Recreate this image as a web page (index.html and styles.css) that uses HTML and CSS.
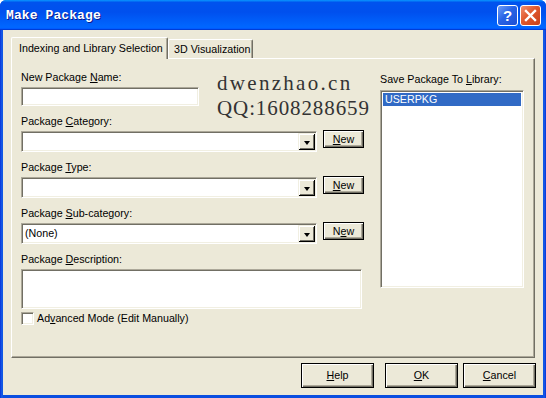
FILE: index.html
```html
<!DOCTYPE html>
<html>
<head>
<meta charset="utf-8">
<title>Make Package</title>
<link rel="stylesheet" href="styles.css">
</head>
<body>
<div class="window">
  <div class="titlebar">
    <span class="title">Make Package</span>
    <div class="title-buttons">
      <span class="tbtn tbtn-help">?</span>
      <span class="tbtn tbtn-close">
        <svg width="13" height="13" viewBox="0 0 13 13"><path d="M2 2 L11 11 M11 2 L2 11" stroke="#fff" stroke-width="2.4" stroke-linecap="square" fill="none"/></svg>
      </span>
    </div>
  </div>
  <div class="client">
    <div class="tabs">
      <div class="tab tab-active tab-index">Indexing and Library Selection</div>
      <div class="tab tab-3d">3D Visualization</div>
    </div>
    <div class="panel">
      <div class="left">
        <div class="lbl lbl-first">New Package <u>N</u>ame:</div>
        <div class="field textbox name-box"></div>

        <div class="lbl">Package <u>C</u>ategory:</div>
        <div class="field row">
          <div class="combo"><span class="combo-val"></span><span class="drop"><i class="arrow"></i></span></div>
          <button class="btn btn-new"><u>N</u>ew</button>
        </div>

        <div class="lbl">Package <u>T</u>ype:</div>
        <div class="field row">
          <div class="combo"><span class="combo-val"></span><span class="drop"><i class="arrow"></i></span></div>
          <button class="btn btn-new"><u>N</u>ew</button>
        </div>

        <div class="lbl">Package <u>S</u>ub-category:</div>
        <div class="field row">
          <div class="combo"><span class="combo-val">(None)</span><span class="drop"><i class="arrow"></i></span></div>
          <button class="btn btn-new">N<u>e</u>w</button>
        </div>

        <div class="lbl">Package <u>D</u>escription:</div>
        <div class="field textbox desc-box"></div>

        <div class="check">
          <span class="checkbox"></span>
          <span>Ad<u>v</u>anced Mode (Edit Manually)</span>
        </div>
      </div>
      <div class="right">
        <div class="lbl lbl-lib">Save Package To <u>L</u>ibrary:</div>
        <div class="listbox">
          <div class="list-item selected">USERPKG</div>
        </div>
      </div>
      <div class="watermark">
        <div class="wm-line wm-1">dwenzhao.cn</div>
        <div class="wm-line wm-2">QQ:1608288659</div>
      </div>
    </div>
    <div class="buttons">
      <button class="btn btn-dlg btn-help"><u>H</u>elp</button>
      <button class="btn btn-dlg btn-ok"><u>O</u>K</button>
      <button class="btn btn-dlg btn-cancel"><u>C</u>ancel</button>
    </div>
  </div>
</div>
</body>
</html>
```

FILE: styles.css
```css
* { box-sizing: border-box; }
html, body { margin: 0; padding: 0; }
body {
  width: 546px;
  height: 398px;
  overflow: hidden;
  background: #ffffff;
  font-family: "Liberation Sans", Arial, sans-serif;
  font-size: 10.7px;
  color: #000;
}
u { text-decoration: underline; text-underline-offset: 1px; }

.window {
  width: 546px;
  height: 398px;
  display: flex;
  flex-direction: column;
  background: linear-gradient(to right, #0831d9 0, #1660e8 2px, #0a4ee0 3px, #0a4ee0 543px, #1660e8 544px, #0831d9 546px);
  border-radius: 6px 6px 0 0;
  overflow: hidden;
}

.titlebar {
  height: 30px;
  flex: none;
  display: flex;
  align-items: center;
  padding: 0 5px 0 6px;
  background: linear-gradient(180deg, #0997ff, #0053ee 8%, #0050ee 40%, #0066ff 88%, #0066ff 93%, #005bff 95%, #003dd7 96%, #003dd7);
}
.title {
  flex: 1;
  font-family: "Liberation Mono", monospace;
  font-weight: bold;
  font-size: 13px;
  color: #fff;
  text-shadow: 1px 1px #0c1a8c;
  letter-spacing: 0.1px;
}
.title-buttons { display: flex; gap: 2px; }
.tbtn {
  width: 21px;
  height: 21px;
  border: 1px solid #fff;
  border-radius: 3px;
  display: flex;
  align-items: center;
  justify-content: center;
}
.tbtn-help {
  background: linear-gradient(135deg, #6e9ef8 0%, #2863e6 45%, #1d4fd4 100%);
  color: #fff;
  font: bold 15px "Liberation Sans", Arial, sans-serif;
}
.tbtn-close {
  background: linear-gradient(135deg, #f09070 0%, #e0582c 45%, #c8401a 100%);
}

.client {
  flex: 1;
  margin: 0 3px 3px;
  background: #ece9d8;
  display: flex;
  flex-direction: column;
  padding: 7px 8px 7px 8px;
}

.tabs {
  height: 21px;
  display: flex;
  align-items: flex-end;
  position: relative;
  z-index: 1;
}
.tab {
  height: 19px;
  border: 1px solid #fff;
  border-right-color: #716f64;
  border-bottom: none;
  border-radius: 2px 2px 0 0;
  box-shadow: inset -1px 0 #aca899;
  line-height: 13px;
  padding-top: 3px;
  white-space: nowrap;
  background: #ece9d8;
}
.tab-active {
  height: 22px;
  margin-bottom: -1px;
  padding-top: 4px;
}
.tab-index { width: 157px; padding-left: 7px; }
.tab-3d { width: 85px; padding-left: 5px; }

.panel {
  height: 300px;
  flex: none;
  position: relative;
  border: 1px solid #fff;
  border-right-color: #716f64;
  border-bottom-color: #716f64;
  box-shadow: inset -1px -1px #aca899;
  padding: 12px 0 0 9px;
  display: grid;
  grid-template-columns: 343px 144px;
  column-gap: 16px;
  align-items: start;
}

.lbl {
  height: 13px;
  line-height: 13px;
  margin-top: 9px;
  white-space: nowrap;
}
.lbl-first { margin-top: 0; }
.field { margin-top: 3px; }

.textbox, .combo, .listbox, .checkbox {
  background: #fff;
  border: 1px solid;
  border-color: #aca899 #fff #fff #aca899;
  box-shadow: inset 1px 1px #716f64, inset -1px -1px #f1efe2;
}
.name-box { width: 178px; height: 19px; }
.desc-box { width: 341px; height: 40px; }

.row { display: flex; align-items: flex-start; gap: 6px; }
.combo {
  width: 296px;
  height: 21px;
  padding: 1px;
  display: flex;
}
.combo-val {
  flex: 1;
  padding-left: 2px;
  line-height: 17px;
}
.drop {
  width: 17px;
  height: 17px;
  background: #ece9d8;
  box-shadow: inset 1px 1px #f1efe2, inset -1px -1px #000, inset 2px 2px #fff, inset -2px -2px #716f64;
  display: flex;
  align-items: center;
  justify-content: center;
  padding-top: 2px;
}
.arrow {
  width: 0;
  height: 0;
  border-left: 3.5px solid transparent;
  border-right: 3.5px solid transparent;
  border-top: 4px solid #000;
}

.btn {
  font-family: "Liberation Sans", Arial, sans-serif;
  font-size: 10.7px;
  color: #000;
  background: #ece9d8;
  border: 1px solid #000;
  box-shadow: inset 1px 1px #fff, inset -1px -1px #716f64, inset -2px -2px #aca899;
  padding: 0;
  margin: 0;
  text-align: center;
  line-height: 14px;
}
.btn-new {
  width: 41px;
  height: 18px;
  margin-top: -1px;
}

.check {
  margin-top: 3px;
  display: flex;
  align-items: center;
  gap: 3px;
  height: 13px;
  line-height: 13px;
}
.checkbox { width: 13px; height: 13px; flex: none; }

.lbl-lib { margin-top: 2px; }
.listbox {
  margin-top: 4px;
  width: 144px;
  height: 198px;
  padding: 2px;
}
.list-item {
  height: 13px;
  line-height: 13px;
  padding-left: 2px;
}
.list-item.selected { background: #316ac5; color: #fff; }

.watermark {
  position: absolute;
  left: 205px;
  top: 12px;
  font-family: "Liberation Serif", "Times New Roman", serif;
  font-size: 21px;
  line-height: 25px;
  color: #333;
  white-space: nowrap;
}
.wm-1 { letter-spacing: 2.3px; }
.wm-2 { letter-spacing: 0.9px; }

.buttons {
  margin-top: 5px;
  display: flex;
  justify-content: flex-end;
  margin-right: -1px;
}
.btn-dlg { width: 73px; height: 25px; line-height: 21px; }
.btn-ok { margin-left: 11px; }
.btn-cancel { margin-left: 5px; }
```
